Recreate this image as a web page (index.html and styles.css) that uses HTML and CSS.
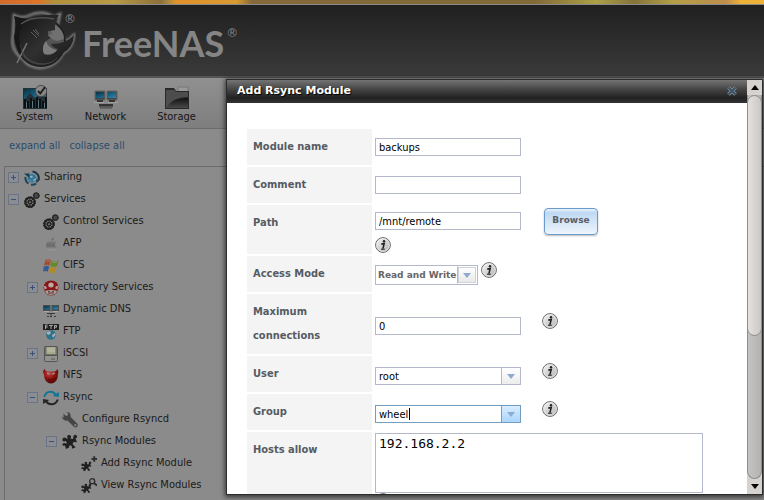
FILE: index.html
```html
<!DOCTYPE html>
<html lang="en">
<head>
<meta charset="utf-8">
<title>FreeNAS - Add Rsync Module</title>
<link rel="stylesheet" href="styles.css">
</head>
<body>
<svg class="defs" aria-hidden="true">
  <defs>
    <linearGradient id="gInfo" x1="0" y1="0" x2="1" y2="1"><stop offset="0" stop-color="#fafafa"/><stop offset=".45" stop-color="#d6d6d6"/><stop offset="1" stop-color="#b4b4b4"/></linearGradient>
    <linearGradient id="gBlue" x1="0" y1="0" x2="1" y2="1"><stop offset="0" stop-color="#0d303f"/><stop offset=".5" stop-color="#156082"/><stop offset="1" stop-color="#3286aa"/></linearGradient>
    <linearGradient id="gDark" x1="0" y1="0" x2="0" y2="1"><stop offset="0" stop-color="#111"/><stop offset="1" stop-color="#4a4a4a"/></linearGradient>
    <linearGradient id="gApple" x1="0" y1="0" x2="0" y2="1"><stop offset="0" stop-color="#7d7d7d"/><stop offset=".5" stop-color="#6a6a6a"/><stop offset="1" stop-color="#a0a0a0"/></linearGradient>
    <radialGradient id="gRed" cx=".4" cy=".3" r=".7"><stop offset="0" stop-color="#b94c48"/><stop offset=".5" stop-color="#951312"/><stop offset="1" stop-color="#4f0808"/></radialGradient>
    <linearGradient id="gShark" x1="0" y1="0" x2="1" y2="1"><stop offset="0" stop-color="#141414"/><stop offset=".5" stop-color="#303030"/><stop offset="1" stop-color="#181818"/></linearGradient>
    <linearGradient id="gDisc" x1="0" y1="0" x2="0" y2="1"><stop offset="0" stop-color="#6a6a6a"/><stop offset="1" stop-color="#3c3c3c"/></linearGradient>
    <filter id="glow" x="-20%" y="-20%" width="140%" height="140%"><feGaussianBlur stdDeviation="1.2"/></filter>
  </defs>
  <symbol id="info" viewBox="0 0 16 16"><circle cx="8" cy="8" r="7.4" fill="url(#gInfo)" stroke="#666"/><circle cx="8" cy="8" r="6.4" fill="none" stroke="#eee" stroke-width=".7"/><circle cx="9" cy="4.200" r="1.200" fill="#222"/><path d="M6.300 7.100l2.900-.5-1.300 5" fill="none" stroke="#222" stroke-width="1.600"/><path d="M6 12.200h3.800" stroke="#222" stroke-width="1.100"/></symbol>
  <symbol id="gears" viewBox="0 0 16 16"><circle cx="6" cy="10.2" r="4.6" fill="#777" stroke="#202020" stroke-width="2"/><circle cx="6" cy="10.2" r="5.2" fill="none" stroke="#202020" stroke-width="1.3" stroke-dasharray="1.6 1.1"/><circle cx="6" cy="10.2" r="1.6" fill="#777" stroke="#222" stroke-width="1.2"/><path d="M6 5.5v3M6 12v3M1.5 10H4M8 10h2.5M3 7l2 2m2 2 2 2M9 7 7 9m-2 2-2 2" stroke="#222"/><circle cx="12.3" cy="3.6" r="2.4" fill="#777" stroke="#292929" stroke-width="1.6"/><circle cx="12.3" cy="3.6" r="3" fill="none" stroke="#292929" stroke-dasharray="1.2 1"/><path d="M12.3 1v5M10 3.6h5" stroke="#333" stroke-width=".8"/></symbol>
  <symbol id="share" viewBox="0 0 16 16"><circle cx="8" cy="8.300" r="4.300" fill="#2f7899"/><path d="m5 7 2-1.500 2 1-1 1.500zM9 10l2.500-2 .5 1.500-2 2zM5 10l1.500 0 1 1.500" fill="#93b1bb"/><path d="M8.500 1.500a6.600 6.600 0 0 1 6 8.500" fill="none" stroke="#163447" stroke-width="2"/><path d="M12 13.700a6.600 6.600 0 0 1-5 1M4.500 13.500A6.600 6.600 0 0 1 1.500 7" fill="none" stroke="#1f465c" stroke-width="2"/><path d="M0 3.500h5.500V8zM12 9.500h4l-3.500 4z" fill="#1b4056"/></symbol>
  <symbol id="apple" viewBox="0 0 16 16"><path d="M8.400 5.800C5.700 4.400 3 5.800 3 9c0 2.500 1.700 5.500 3.500 5.500 1 0 1.200-.5 2.200-.5s1.200.5 2.200.5c1.200 0 2.300-1.900 2.700-3.200-2.300-1.100-2.200-3.800.1-5-1.500-1.600-3.600-1.200-5.300-.5z" fill="url(#gApple)"/><path d="M8.200 4.700c-.1-2 1.200-3.200 2.700-3.500.2 2-1 3.400-2.700 3.500z" fill="#707070"/></symbol>
  <symbol id="windows" viewBox="0 0 16 16"><path d="M2.500 2q3-1.600 5.300 0L6.400 7.500Q3.900 6 1 7.500z" fill="#aa482b"/><path d="m8.600 2.500q3.200 1.800 7 .2l-1.500 5.300Q11 9.400 7.200 7.800z" fill="#64892d"/><path d="M.8 8.400q3-1.500 5.400 0l-1.500 5.400Q2.600 12.300 0 13.600z" fill="#365d91"/><path d="M7 8.600q3.300 1.700 6.800.2l-1.500 5.600q-3.400 1.500-6.700-.3z" fill="#b18b2a"/><path d="M3.500 3.200q2-.8 3.300 0M9.400 4q2.700 1 4.600.1" stroke="#b09a79" fill="none" stroke-width=".7"/></symbol>
  <symbol id="directory" viewBox="0 0 16 16"><path d="M2 9h12v3q-1 3.300-6 3.300T2 12z" fill="#a3a09b" stroke="#753535" stroke-width=".7"/><path d="M.5 7.500Q1 .5 8 .5t7.500 7q0 3-2 3.300Q8 9 2.500 10.800.5 10.400.5 7.500z" fill="#8b1617"/><ellipse cx="8" cy="5" rx="2.700" ry="2.500" fill="#b9aaa6"/><path d="M1 6q3-.5 2.700 2.600L1.500 9.500M15 6q-3-.5-2.700 2.600l2.200.9" fill="#b5a49e"/><path d="M5 13h6" stroke="#81201f"/><circle cx="6" cy="11.500" r=".7" fill="#222"/><circle cx="10" cy="11.500" r=".7" fill="#222"/></symbol>
  <symbol id="dns" viewBox="0 0 16 16"><path d="M0 3h7.500v6H0zM8.500 3H16v6H8.500z" fill="#4b4b4b"/><path d="M1 4h5.500v3.600H1zM9.500 4H15v3.600H9.500z" fill="url(#gBlue)"/><path d="M1 9.500h5M10 9.500h5" stroke="#aaa"/><path d="M4 11.500h8M8 11.500V14M4 14.500h2M7 14.500h2M11 14.500h2" fill="none" stroke="#3a3a3a"/></symbol>
  <symbol id="globe" viewBox="0 0 16 16"><rect width="16" height="6" y="0" fill="#202020"/><path d="M2.500 5V1h2.200M2.700 3h2M6 1.400h4M8 1v4M11.500 5V1.500h2v1.700h-2" fill="none" stroke="#aaa" stroke-width="1"/><circle cx="8" cy="11" r="4.800" fill="#2e718d"/><path d="m4 8 3-1 1 2-2 2-2-1zM9 11l3-2 .5 2-2.500 3zM10 7l2 1" fill="#a2b2b7"/></symbol>
  <symbol id="drive" viewBox="0 0 16 16"><rect x="1.500" y=".5" width="13" height="15" rx="1" fill="#707066" stroke="#555"/><path d="M3.500 1h9v7h-9z" fill="#a8aa8c"/><path d="M4 3h8M4 5h8" stroke="#bdbda9"/><path d="M2 9.500h12v5.500H2z" fill="#92928e"/><path d="M2 9.500h12M8 13h4" stroke="#4e4e4e" stroke-width=".9"/></symbol>
  <symbol id="nfs" viewBox="0 0 16 16"><path d="M1 6.500C-.7 4 .2 1.700 2 1q-.2 2 2.500 2.500h7Q14 3 14 1q2 1.800.9 5.200C15 12 12 15.400 8 15.400S1.200 12 1 6.500z" fill="url(#gRed)"/><path d="M4 5.200q1.500 0 2.500 1M9 6.400q1-1.200 2.800-1.200" stroke="#b88a82" stroke-width="1.400"/><path d="m5 11 3 1.500 4-3" stroke="#530707" fill="none"/></symbol>
  <symbol id="sync" viewBox="0 0 16 16"><path d="M1.200 7Q2.600 1.700 7.500 1.700q3.600 0 5.400 3.300" fill="none" stroke="#147696" stroke-width="2"/><path d="m9.700 6 6.300 1-.2-5z" fill="#147696"/><path d="M14.800 9.500q-1.600 4.800-6.300 4.800-3.700 0-5.400-3" fill="none" stroke="#252525" stroke-width="2"/><path d="m6.300 10-6.300-1 .2 5z" fill="#252525"/></symbol>
  <symbol id="wrench" viewBox="0 0 16 16"><path d="M1.400 1.600 4 4l1.700-.4L6 1.200 4.400 0C7.200-.3 9.200 2 8.600 5l6.500 6.500q1.500 1.800 0 3.300t-3.300 0L5.500 8.500C2.600 9.400 0 7.200.2 4.200L1.800 5.700z" fill="#454545"/><circle cx="13.300" cy="13.200" r="1.100" fill="#888"/></symbol>
  <symbol id="puzzle" viewBox="0 0 16 16"><path d="m2.500 3.500 3.500 1.500Q4.500 2.600 5.800 1.300 8 .2 9 2.200q.2 1.300-.7 2.300l2.700.6.500-3Q13-.5 14.800 1.700q1 1.700-1.300 2.700l1.500 3.900-2.800-.2q-2.100.6-1.200 2.600l2.700 2.600-3.700 1.400q.3-3.300-1.500-3.500-2 .2-1.300 2.300l-3.300 1.500-.8-3.500Q-.3 12.200.6 10q1.400-1.700 3-.4L5 9 3.800 7Q.4 8.400.4 5.500.7 3.400 2.500 3.500z" fill="#202020"/></symbol>
  <symbol id="puzzle-add" viewBox="0 0 16 16"><use href="#puzzle" y="5" width="11" height="11"/><path d="M10.500 3H16M13.200.3v5.400" stroke="#303030" stroke-width="2"/></symbol>
  <symbol id="puzzle-view" viewBox="0 0 16 16"><use href="#puzzle" y="5" width="11" height="11"/><circle cx="11.200" cy="3.200" r="2.500" fill="none" stroke="#2b2b2b" stroke-width="1.300"/><path d="m13 5 3 2.500" stroke="#2b2b2b" stroke-width="1.800"/></symbol>
  <symbol id="arrow" viewBox="0 0 8 5"><path d="M0 0h8L4 5z" fill="#8fa9d0"/></symbol>
</svg>

<div class="banner"></div>
<header class="header">
  <svg class="emblem" viewBox="0 0 66 62" aria-label="FreeNAS emblem">
    <path d="M4 5q8 4 14 1 14-7 26 1l6-3-3 14 9 14 8-7q-1 13-11 18-7 14-23 15-12-1-17-9Q0 40 3 26z" fill="none" stroke="#858585" stroke-width="2.500" filter="url(#glow)"/>
    <circle cx="31" cy="32" r="24" fill="url(#gDisc)" stroke="#202020" stroke-width="2"/>
    <path d="M4 6q8 3 17 3-8 6-11 17-1 12 4 20-8-5-10-19Q7 15 4 6z" fill="#171717"/>
    <path d="M14 14Q27 3 49 5q-5 7-3 17-4 0-8-1-1 5 3 7-7 3-8 9-1 7 6 8 6-1 9-6-5-1-7-5 15 0 23-9-1 13-11 18-8 11-21 11-14-1-19-12Q5 25 14 14z" fill="url(#gShark)"/>
    <path d="M45 15q9 5 9 14l-7 2q-5-1-9-6l5-1-3-3 5-1z" fill="#707070"/>
    <path d="M36 31q-5 6-2 13 8 2 13-4-8-1-11-9z" fill="#7c7c7c"/>
    <path d="m21 22 6 6m-4-8 6 6m-4-7 4 5" stroke="#5f5f5f"/>
    <path d="M17 33 7 53" stroke="#757575" stroke-width="1.500"/>
    <path d="M12 42q8 13 23 12 8-1 12-6" stroke="#484848" fill="none"/>
    <path d="M11 14q12-9 33-5" stroke="#505050" fill="none" stroke-width="1.500"/>
  </svg>
  <span class="mark mark-emblem">®</span>
  <span class="brand">FreeNAS</span>
  <span class="mark">®</span>
</header>

<nav class="toolbar">
  <a class="tool" href="#system"><svg viewBox="0 0 24 24"><path d="M0 3h24v21H0z" fill="#252f34"/><path d="M1 4h22v8l-6-3-5 4-5-5-6 7z" fill="url(#gBlue)"/><path d="M2 23v-9M5 23v-7M8 23V13M11 23v-8M14 23V12M17 23v-9M20 23v-7M23 23V12" stroke="#0a0f11" stroke-width="2"/><path d="M3.500 23v-6M9.500 23v-7M15.500 23v-8M21.500 23v-5" stroke="#5d7884"/><circle cx="18" cy="6" r="5.600" fill="#888" stroke="#4b4b4b"/><path d="m15 6 2.300 2.500L22 2" fill="none" stroke="#202020" stroke-width="2"/></svg>System</a>
  <a class="tool" href="#network"><svg viewBox="0 0 24 24"><path d="M1 6h10v9H1zM13 6h10v9H13z" fill="#444" stroke="#666"/><path d="M2 7h8v6H2zM14 7h8v6h-8z" fill="url(#gBlue)"/><path d="M3 16h6M15 16h6" stroke="#333" stroke-width="2"/><path d="M0 17.500h10M14 17.500h10" stroke="#a0a0a0"/><path d="M5 19h14v4H5z" fill="#777"/><path d="M5 19h14v2.500H5z" fill="#343434"/><path d="M6 23h12" stroke="#454545"/></svg>Network</a>
  <a class="tool" href="#storage"><svg viewBox="0 0 24 24"><path d="M13 2h10v7H13z" fill="#9a9a9a" stroke="#777"/><path d="M0 3h9l2 3h13v18H0z" fill="#292929"/><path d="M1 5h8l2 2h12v5Q7 12 2 23H1z" fill="#4d4d4d"/><path d="M1 23Q9 12 23 13v10z" fill="url(#gDark)"/></svg>Storage</a>
</nav>

<main class="sidebar">
  <div class="links"><a href="#expand">expand all</a><a href="#collapse">collapse all</a></div>
  <ul class="tree">
    <li><button class="toggle plus" aria-label="Expand Sharing"></button><svg><use href="#share"/></svg>Sharing</li>
    <li><button class="toggle" aria-label="Collapse Services"></button><svg><use href="#gears"/></svg>Services</li>
    <li class="l1"><i class="toggle none"></i><svg><use href="#gears"/></svg>Control Services</li>
    <li class="l1"><i class="toggle none"></i><svg><use href="#apple"/></svg>AFP</li>
    <li class="l1"><i class="toggle none"></i><svg><use href="#windows"/></svg>CIFS</li>
    <li class="l1"><button class="toggle plus" aria-label="Expand Directory Services"></button><svg><use href="#directory"/></svg>Directory Services</li>
    <li class="l1"><i class="toggle none"></i><svg><use href="#dns"/></svg>Dynamic DNS</li>
    <li class="l1"><i class="toggle none"></i><svg><use href="#globe"/></svg>FTP</li>
    <li class="l1"><button class="toggle plus" aria-label="Expand iSCSI"></button><svg><use href="#drive"/></svg>iSCSI</li>
    <li class="l1"><i class="toggle none"></i><svg><use href="#nfs"/></svg>NFS</li>
    <li class="l1"><button class="toggle" aria-label="Collapse Rsync"></button><svg><use href="#sync"/></svg>Rsync</li>
    <li class="l2"><i class="toggle none"></i><svg><use href="#wrench"/></svg>Configure Rsyncd</li>
    <li class="l2"><button class="toggle" aria-label="Collapse Rsync Modules"></button><svg><use href="#puzzle"/></svg>Rsync Modules</li>
    <li class="l3"><i class="toggle none"></i><svg><use href="#puzzle-add"/></svg>Add Rsync Module</li>
    <li class="l3"><i class="toggle none"></i><svg><use href="#puzzle-view"/></svg>View Rsync Modules</li>
    <li class="l1"><i class="toggle none"></i><svg viewBox="0 0 16 16"><path d="M0 0h13v15H0z" fill="#555"/><path d="M14 0h2v3h-2z" fill="#8b1617"/></svg></li>
  </ul>
</main>

<section class="dialog" role="dialog" aria-labelledby="title">
  <div class="pane">
    <div class="titlebar"><h1 id="title">Add Rsync Module</h1><button class="close" aria-label="Close"><svg viewBox="0 0 10 10"><path d="m1.500 1.500 7 7m0-7-7 7" stroke="#909090" stroke-width="3.600"/><path d="m1.500 1.500 7 7m0-7-7 7" stroke="#39546b" stroke-width="2.200"/></svg></button></div>
    <form class="form">
      <label for="name">Module name</label>
      <div class="field"><input class="text" id="name" value="backups"></div>
      <label for="comment">Comment</label>
      <div class="field"><input class="text" id="comment"></div>
      <label for="path">Path</label>
      <div class="field path"><div class="line"><input class="text" id="path" value="/mnt/remote"><button type="button" class="browse">Browse</button></div><svg class="info"><use href="#info"/></svg></div>
      <label for="mode">Access Mode</label>
      <div class="field mode"><div class="select"><select id="mode"><option>Read and Write</option></select><span class="drop"><svg><use href="#arrow"/></svg></span></div><svg class="info"><use href="#info"/></svg></div>
      <label for="max">Maximum connections</label>
      <div class="field tall"><input class="text" id="max" value="0"><svg class="info"><use href="#info"/></svg></div>
      <label for="user">User</label>
      <div class="field low"><div class="combo"><input id="user" value="root"><button type="button" aria-label="Show users"><svg><use href="#arrow"/></svg></button></div><svg class="info"><use href="#info"/></svg></div>
      <label for="group">Group</label>
      <div class="field low"><div class="combo active"><input id="group" value="wheel"><span class="caret"></span><button type="button" aria-label="Show groups"><svg><use href="#arrow"/></svg></button></div><svg class="info"><use href="#info"/></svg></div>
      <label for="hosts">Hosts allow</label>
      <div class="field hosts"><textarea id="hosts">192.168.2.2</textarea><svg class="info"><use href="#info"/></svg></div>
    </form>
  </div>
  <div class="scroll"><span class="step"><svg viewBox="0 0 8 5"><path d="M0 5h8L4 0z"/></svg></span><div class="track"><div class="thumb"></div></div><span class="step"><svg viewBox="0 0 8 5"><path d="M0 0h8L4 5z"/></svg></span></div>
</section>
</body>
</html>
```
FILE: styles.css
```css
* { box-sizing: border-box; }

body {
  margin: 0;
  height: 100vh;
  overflow: hidden;
  display: flex;
  flex-direction: column;
  background: #8b8b8b;
  color: #1a1a1a;
  font: 11px "DejaVu Sans Condensed", "DejaVu Sans", sans-serif;
}

svg { display: block; flex: none; }
.defs { position: absolute; width: 0; height: 0; }
button { padding: 0; font: inherit; }

.banner {
  flex: none;
  height: 5px;
  border-bottom: 1px solid #8b8b8b;
  background: linear-gradient(90deg, #d36b2c 0, #dd7428 5%, #b1913b 7%, #b99a45 15%, #8c713a 21%, #a58a3f 22%, #e29129 23%, #d99a32 31%, #84693a 33%, #816a37 70%, #ada047 78%, #85733b 83%, #b39f46 88%, #bd8d4c 95%, #edb237 97%);
}

.header {
  flex: none;
  display: flex;
  align-items: flex-start;
  height: 73px;
  padding: 5px 10px 0;
  background: linear-gradient(#202020, #3a3a3a);
  border-bottom: 2px solid #555;
  color: #858585;
}
.emblem { width: 66px; height: 62px; }
.mark { font: 12px "DejaVu Sans", sans-serif; line-height: 14px; padding-top: 16px; }
.mark-emblem { padding-top: 2px; margin-left: -12px; }
.brand { font: bold 36px Lato, sans-serif; line-height: 46px; padding: 10px 2px 0 6px; }

.toolbar {
  flex: none;
  display: flex;
  gap: 2px;
  height: 51px;
  padding-top: 7px;
  background: linear-gradient(#909090, #7e7e7e);
  border-bottom: 1px solid #6c6c6c;
}
.tool {
  display: flex;
  flex-direction: column;
  align-items: center;
  width: 69px;
  color: #151515;
  text-decoration: none;
  line-height: 16px;
}
.tool svg { width: 24px; height: 24px; }

.sidebar { flex: 1; min-height: 0; padding-left: 4px; }
.links { display: flex; gap: 9px; height: 37px; padding: 10px 5px 0; line-height: 14px; }
.links a { color: #2b4c6b; text-decoration: none; }

.tree {
  margin: 0;
  padding: 0 0 0 3px;
  list-style: none;
  border: solid #6c6c6c;
  border-width: 1px 0 0 1px;
}
.tree li { display: flex; align-items: center; height: 22px; white-space: nowrap; line-height: 20px; padding-bottom: 2px; }
.tree .l1 { padding-left: 19px; }
.tree .l2 { padding-left: 38px; }
.tree .l3 { padding-left: 57px; }
.tree svg { width: 16px; height: 16px; margin: 2px 4px 0 5px; }
.toggle {
  flex: none;
  width: 11px;
  height: 11px;
  border: 1px solid #6b7387;
  background: linear-gradient(#3d4e78, #3d4e78) center / 5px 1px no-repeat, #8a8d91;
}
.toggle.plus {
  background: linear-gradient(#3d4e78, #3d4e78) center / 5px 1px no-repeat, linear-gradient(#3d4e78, #3d4e78) center / 1px 5px no-repeat, #8a8d91;
}
.toggle.none { visibility: hidden; }

.dialog {
  position: absolute;
  inset: 79px 1px 5px 226px;
  display: flex;
  border: 1px solid #2c2c2c;
  background: #fff;
  box-shadow: 0 1px 5px 1px rgba(0, 0, 0, .65);
}
.pane { flex: 1; min-width: 0; overflow: hidden; }
.titlebar {
  display: flex;
  align-items: center;
  justify-content: space-between;
  height: 23px;
  padding: 0 10px;
  background: linear-gradient(#747474, #444 45%, #222 85%, #2c2c2c);
  border-bottom: 2px solid #303030;
}
.titlebar h1 { margin: 0; font: bold 11px "DejaVu Sans", sans-serif; color: #fff; text-shadow: 1px 1px 1px #000; }
.close { border: 0; background: none; }
.close svg { width: 10px; height: 10px; }

.form {
  display: grid;
  grid-template-columns: 125px 1fr;
  column-gap: 3px;
  row-gap: 2px;
  padding: 26px 20px 0;
}
.form > label {
  padding: 6px;
  background: #f4f4f4;
  color: #565b63;
  font-weight: bold;
  line-height: 24px;
}
.field { display: flex; align-items: flex-start; padding-top: 9px; }
.text, .combo {
  width: 146px;
  height: 18px;
  border: 1px solid #b3b8ca;
  background: #fff;
  color: #000;
}
.text, .combo input { padding: 0 3px; font: 11px "DejaVu Sans Condensed", "DejaVu Sans", sans-serif; }
.info { width: 16px; height: 16px; margin-left: 21px; }
.path { flex-direction: column; padding-top: 3px; }
.line { display: flex; align-items: flex-start; }
.line .text { margin-top: 4px; }
.path .info { margin: 2px 0 1px; }
.browse {
  width: 54px;
  height: 27px;
  margin-left: 23px;
  padding-bottom: 3px;
  border: 1px solid #6b9bcc;
  border-radius: 4px;
  background: linear-gradient(#eaf3fc, #bfd9f3 15%, #eef5fc);
  box-shadow: 0 1px 2px #bbb;
  color: #5a5e65;
  font: bold 9px "DejaVu Sans", sans-serif;
}
.mode { padding-top: 6px; }
.mode .info { margin-left: 3px; }
.select { position: relative; margin-top: 3px; }
.select select {
  appearance: none;
  display: block;
  width: 103px;
  height: 20px;
  padding: 0 0 0 2px;
  border: 1px solid #b3b8ca;
  border-radius: 0;
  background: #fff;
  color: #666;
  font: bold 9px "DejaVu Sans", sans-serif;
}
.drop {
  position: absolute;
  inset: 1px 1px 1px auto;
  width: 20px;
  display: grid;
  place-items: center;
  border: 1px solid #fff;
  border-left: 1px solid #b3b8ca;
  background: linear-gradient(#fff, #e8e8e8);
  box-shadow: inset 0 0 0 1px #d0d2da;
  pointer-events: none;
}
.drop svg, .combo svg { width: 8px; height: 5px; }
.tall { padding-top: 19px; }
.tall .text, .low .combo { margin-top: 4px; }
.low { padding-top: 7px; }
.combo { position: relative; display: flex; }
.combo input { flex: 1; min-width: 0; border: 0; background: none; outline: 0; }
.combo button {
  display: grid;
  place-items: center;
  width: 19px;
  border: 0;
  border-left: 1px solid #b3b8ca;
  background: linear-gradient(#fff, #ececec);
}
.combo.active { border-color: #759dc0; }
.combo.active button { border-color: #759dc0; background: linear-gradient(#d8ecff, #abd6ff); }
.caret { position: absolute; left: 33px; top: 2px; width: 1px; height: 12px; background: #000; }
.hosts { flex-direction: column; padding-top: 1px; }
.hosts .info { margin-left: 0; }
.hosts textarea {
  width: 328px;
  height: 60px;
  padding: 2px 3px;
  border: 1px solid #b3b8ca;
  outline: 0;
  resize: none;
  color: #000;
  font: 13px "DejaVu Sans Mono", monospace;
}

.scroll { display: flex; flex-direction: column; width: 15px; background: #d6d2d0; }
.step { display: grid; place-items: center; height: 15px; }
.step svg { width: 8px; height: 5px; }
.track { flex: 1; border-radius: 0 0 8px 8px; border: 1px solid #8f8d8b; border-top: 0; background: linear-gradient(90deg, #c5c3c1, #b5b3b1); }
.thumb { height: 63%; margin: 0 -1px; border: 1px solid #8f8d8b; border-radius: 8px; background: linear-gradient(90deg, #e4e1df, #cbc7c4); }
```
